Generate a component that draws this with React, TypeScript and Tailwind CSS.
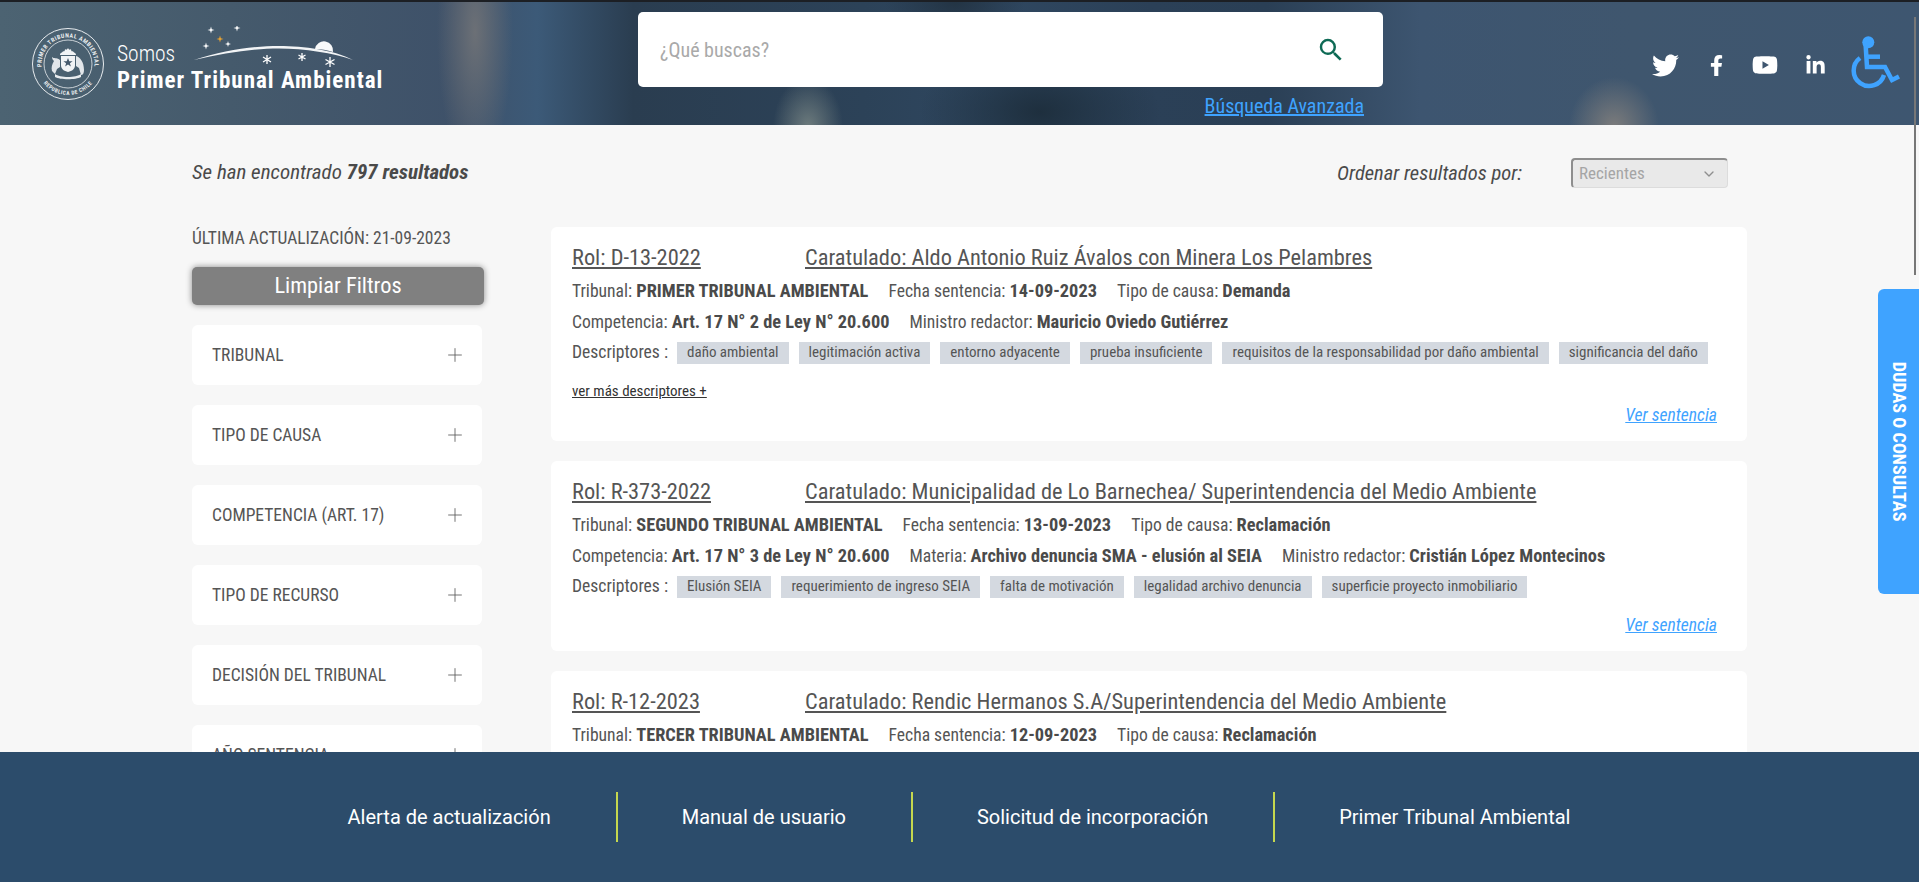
import React from 'react';
import { Plus, ChevronDown } from 'lucide-react';
import { FaTwitter, FaFacebookF, FaYoutube, FaLinkedinIn } from 'react-icons/fa';
import { MdSearch } from 'react-icons/md';

const filters = ['TRIBUNAL', 'TIPO DE CAUSA', 'COMPETENCIA (ART. 17)', 'TIPO DE RECURSO', 'DECISIÓN DEL TRIBUNAL', 'AÑO SENTENCIA'];

const results = [
  {
    rol: 'Rol: D-13-2022',
    title: 'Caratulado: Aldo Antonio Ruiz Ávalos con Minera Los Pelambres',
    row1: [['Tribunal:', 'PRIMER TRIBUNAL AMBIENTAL'], ['Fecha sentencia:', '14-09-2023'], ['Tipo de causa:', 'Demanda']],
    row2: [['Competencia:', 'Art. 17 N° 2 de Ley N° 20.600'], ['Ministro redactor:', 'Mauricio Oviedo Gutiérrez']],
    tags: ['daño ambiental', 'legitimación activa', 'entorno adyacente', 'prueba insuficiente', 'requisitos de la responsabilidad por daño ambiental', 'significancia del daño'],
    more: true,
  },
  {
    rol: 'Rol: R-373-2022',
    title: 'Caratulado: Municipalidad de Lo Barnechea/ Superintendencia del Medio Ambiente',
    row1: [['Tribunal:', 'SEGUNDO TRIBUNAL AMBIENTAL'], ['Fecha sentencia:', '13-09-2023'], ['Tipo de causa:', 'Reclamación']],
    row2: [['Competencia:', 'Art. 17 N° 3 de Ley N° 20.600'], ['Materia:', 'Archivo denuncia SMA - elusión al SEIA'], ['Ministro redactor:', 'Cristián López Montecinos']],
    tags: ['Elusión SEIA', 'requerimiento de ingreso SEIA', 'falta de motivación', 'legalidad archivo denuncia', 'superficie proyecto inmobiliario'],
    more: false,
  },
  {
    rol: 'Rol: R-12-2023',
    title: 'Caratulado: Rendic Hermanos S.A/Superintendencia del Medio Ambiente',
    row1: [['Tribunal:', 'TERCER TRIBUNAL AMBIENTAL'], ['Fecha sentencia:', '12-09-2023'], ['Tipo de causa:', 'Reclamación']],
    row2: [],
    tags: [],
    more: false,
  },
];

const footerLinks = ['Alerta de actualización', 'Manual de usuario', 'Solicitud de incorporación', 'Primer Tribunal Ambiental'];

const Star = ({ x, y, r = 3.5, fill = '#fff' }: { x: number; y: number; r?: number; fill?: string }) => (
  <path d={`M${x} ${y - r}L${x + r * 0.22} ${y - r * 0.22}L${x + r} ${y}L${x + r * 0.22} ${y + r * 0.22}L${x} ${y + r}L${x - r * 0.22} ${y + r * 0.22}L${x - r} ${y}L${x - r * 0.22} ${y - r * 0.22}Z`} fill={fill} />
);

const Seal = () => (
  <svg width="74" height="74" viewBox="0 0 74 74" className="shrink-0">
    <defs>
      <path id="sealTop" d="M12.100 46.100A26.500 26.500 0 1 1 61.900 46.100" />
      <path id="sealBottom" d="M6 37a31 31 0 0 0 62 0" />
    </defs>
    <circle cx="37" cy="37" r="35.500" fill="none" stroke="#e8ecef" strokeWidth="1" />
    <circle cx="37" cy="37" r="24" fill="none" stroke="#e8ecef" strokeWidth="0.8" />
    <text fontSize="6" fontWeight="700" fill="#e8ecef" letterSpacing="0.5">
      <textPath href="#sealTop" startOffset="50%" textAnchor="middle">PRIMER TRIBUNAL AMBIENTAL</textPath>
    </text>
    <text fontSize="5.500" fontWeight="700" fill="#e8ecef" letterSpacing="0.5">
      <textPath href="#sealBottom" startOffset="50%" textAnchor="middle">REPUBLICA DE CHILE</textPath>
    </text>
    <path d="M30 29h14v9c0 4-3 6-7 7-4-1-7-3-7-7z" fill="#f1f3f5" />
    <path d="M37 31l1.300 3.200h3.300l-2.700 2 1 3.200-2.900-2-2.900 2 1-3.200-2.700-2h3.300z" fill="#44586b" />
    <path d="M29 28c0-3 3-2 3-4 1 1 2 0 2-2 1 1 2 1 3-1 1 2 2 2 3 1 0 2 1 3 2 2 0 2 3 1 3 4z" fill="#f1f3f5" />
    <path d="M29 33c-4-3-6-1-8-3 0 2 1 3 2 4-2 3-3 7-2 10l3 3 2-5 3-2zM45 29c4 1 8 6 8 14 0 3-1 5-3 5l-2-7-3-2z" fill="#e2e6ea" />
    <path d="M24 47c5 4 21 4 26 0v3c-5 3-21 3-26 0z" fill="#e8ecef" />
  </svg>
);

// arc, sun and stars over the "Somos" line of the logo
const LogoArc = () => (
  <svg width="164" height="44" viewBox="0 0 164 44" className="absolute top-[24px] left-[194px]">
    <path d="M0 34C30 24 60 20 85 20C110 20 140 24 159 34C140 27 110 22.500 85 22.500C60 22.500 30 27 0 34Z" fill="#f2f4f6" />
    <path d="M121 23a9 9 0 0 1 18 3c-6-2-12-3-18-3z" fill="#f8f9fa" />
    <Star x={17} y={4} />
    <Star x={43} y={2} />
    <Star x={26} y={13} fill="#f0a62f" />
    <Star x={12} y={20} />
    <Star x={34} y={18} r={3} />
    <g stroke="#fff" strokeWidth="1.300">
      <path d="M73 29v9M69 31l8 5M77 31l-8 5" />
      <path d="M108 27v8M104.500 29l7 4M111.500 29l-7 4" />
      <path d="M136 31v10M131.500 33.500l9 5M140.500 33.500l-9 5" />
    </g>
  </svg>
);

const Wheelchair = () => (
  <svg width="70" height="65" viewBox="0 0 70 65" className="mt-[-2px] ml-[14px] shrink-0" fill="none" stroke="#3fa3ff" strokeWidth="4.500">
    <circle cx="28.300" cy="12.300" r="6" fill="#3fa3ff" stroke="none" />
    <path d="M25.500 13L27 37H45L52 50L59 46.500" />
    <path d="M28 26.700H40" />
    <path d="M20 28A15.500 15.500 0 1 0 44 45" />
  </svg>
);

const Meta = ({ items }: { items: string[][] }) => (
  <div className="flex h-[31px] items-center gap-5 text-[17.600px] whitespace-nowrap text-[#555]">
    {items.map(([label, value]) => (
      <span key={label}>
        {label} <b className="text-[18.350px] font-bold text-[#4a4a4a]">{value}</b>
      </span>
    ))}
  </div>
);

const ResultCard = ({ r }: { r: (typeof results)[number] }) => (
  <article className="rounded-md bg-white pt-[16px] pr-[30px] pb-[14px] pl-[21px]">
    <div className="flex h-[30px] items-center text-[22.400px] text-[#555] underline underline-offset-2">
      <span className="w-[233px] shrink-0">{r.rol}</span>
      <span>{r.title}</span>
    </div>
    <div className="mt-[2px]">
      <Meta items={r.row1} />
      <Meta items={r.row2} />
      {r.tags.length > 0 && (
        <div className="flex h-[31px] items-center text-[17.600px] whitespace-nowrap text-[#555]">
          <span className="mr-[9px]">Descriptores :</span>
          <div className="flex gap-[10px]">
            {r.tags.map((t) => (
              <span key={t} className="flex h-[22px] items-center bg-[#d4d9e0] px-[10px] text-[15px] text-[#555]">{t}</span>
            ))}
          </div>
        </div>
      )}
    </div>
    <div className="mt-[11px]">
      {r.more && <div className="flex h-[24px] items-center text-[15px] text-[#333] underline">ver más descriptores +</div>}
      <div className="flex h-[24px] items-center justify-end">
        <a className="text-[17.600px] text-[#3fa3ff] italic underline">Ver sentencia</a>
      </div>
    </div>
  </article>
);

export default function App() {
  return (
    <div className="relative flex h-[882px] flex-col overflow-hidden bg-[#f7f7f7] font-['Roboto_Condensed',Roboto,sans-serif] font-stretch-condensed">
      {/* Header */}
      <header className="relative flex h-[125px] shrink-0 border-t-2 border-[#1c1f24] bg-[radial-gradient(ellipse_45px_50px_at_1614px_125px,#7c7c7c_0%,rgba(124,124,124,0)_100%),radial-gradient(ellipse_35px_50px_at_808px_125px,#6d7b7d_0%,rgba(109,123,125,0)_100%),radial-gradient(ellipse_38px_140px_at_475px_30px,#6c7076_0%,rgba(108,112,118,0)_100%),radial-gradient(ellipse_120px_70px_at_1040px_110px,#1e2f3e_0%,rgba(30,47,62,0)_100%),radial-gradient(ellipse_70px_40px_at_955px_0px,#233444_0%,rgba(35,52,68,0)_100%),linear-gradient(90deg,#4c6372_0%,#455a6c_12%,#3e5169_24%,#3c5a78_28%,#2a3d50_33%,#2c4258_45%,#2f4760_52%,#2b4057_60%,#2a3f55_66%,#3d5570_74%,#3f566e_85%,#3e5670_100%)]">
        <LogoArc />
        <div className="flex w-[638px] shrink-0 items-center pl-[31px]">
          <Seal />
          <div className="ml-[12px] flex flex-col pt-[7px] text-white">
            <span className="text-[21.500px] leading-[27px] font-light">Somos</span>
            <span className="text-[23px] leading-[27px] font-bold tracking-[1px]">Primer Tribunal Ambiental</span>
          </div>
        </div>
        <div className="flex w-[745px] shrink-0 flex-col pt-[10px]">
          <div className="flex h-[75px] items-center justify-between rounded-[5px] bg-white pr-[37px] pl-[22px]">
            <span className="text-[20px] text-[#a9a9a9]">¿Qué buscas?</span>
            <MdSearch size={30} className="text-[#0e6a55]" />
          </div>
          <a className="mt-[7px] self-end pr-[19px] text-[20px] leading-[24px] text-[#3fa3ff] underline">Búsqueda Avanzada</a>
        </div>
        <div className="flex flex-1 items-center pl-[269px] text-white">
          <div className="mt-[3px] flex items-center">
            <FaTwitter size={27} />
            <FaFacebookF size={21} className="ml-[27px]" />
            <FaYoutube size={26} className="ml-[25px]" />
            <FaLinkedinIn size={21} className="ml-[27px]" />
          </div>
          <Wheelchair />
        </div>
      </header>

      {/* Results */}
      <main className="min-h-0 flex-1 overflow-hidden pr-[172px] pl-[192px]">
        <div className="mt-[32px] flex h-[32px] items-center justify-between pr-[19px]">
          <p className="text-[21px] text-[#4a4a4a] italic">
            Se han encontrado <b className="font-bold">797 resultados</b>
          </p>
          <div className="flex items-center">
            <span className="text-[20.500px] text-[#4a4a4a] italic">Ordenar resultados por:</span>
            <div className="ml-[49px] flex h-[30px] w-[157px] items-center justify-between rounded-[4px] border border-t-2 border-l-2 border-[#dcdcdc] border-t-[#8e8e8e] border-l-[#8e8e8e] bg-[#e9e9e9] pr-[10px] pl-[6px] text-[17px] text-[#a5a5a5]">
              Recientes
              <ChevronDown size={16} className="text-[#8f8f8f]" />
            </div>
          </div>
        </div>
        <div className="mt-[38px] flex gap-[67px]">
          <aside className="w-[292px] shrink-0">
            <p className="mt-[-1px] flex h-[24px] items-center text-[17.500px] text-[#555]">ÚLTIMA ACTUALIZACIÓN: 21-09-2023</p>
            <button className="mt-[17px] flex h-[38px] w-full items-center justify-center rounded-[5px] bg-[#808080] text-[22.400px] text-white shadow-[0_0_6px_rgba(0,0,0,0.45)]">Limpiar Filtros</button>
            <div className="mt-[20px] flex w-[290px] flex-col gap-[20px]">
              {filters.map((f) => (
                <div key={f} className="flex h-[60px] items-center justify-between rounded-md bg-white pr-[16px] pl-[20px] text-[17.500px] text-[#555]">
                  {f}
                  <Plus size={22} strokeWidth={0.9} className="text-[#555]" />
                </div>
              ))}
            </div>
          </aside>
          <section className="flex min-w-0 flex-1 flex-col gap-[20px]">
            {results.map((r) => (
              <ResultCard key={r.rol} r={r} />
            ))}
          </section>
        </div>
      </main>

      {/* Footer */}
      <footer className="relative flex h-[130px] shrink-0 items-center justify-center bg-[#2c4c6b] font-['Roboto',sans-serif] font-stretch-normal">
        {footerLinks.map((l, i) => (
          <div key={l} className={`flex h-[50px] items-center pr-[65px] pl-[64px] text-[20px] text-white ${i < footerLinks.length - 1 ? 'border-r-2 border-[#c5d74e]' : ''}`}>
            {l}
          </div>
        ))}
      </footer>

      {/* Side tab and scrollbar */}
      <div className="absolute top-[289px] right-0 flex h-[305px] w-[41px] items-center justify-center rounded-l-[6px] bg-[#3fa3ff]">
        <span className="rotate-90 text-[18.200px] font-bold whitespace-nowrap text-white">DUDAS O CONSULTAS</span>
      </div>
      <div className="absolute top-[17px] right-[3px] h-[258px] w-[2px] bg-[#777]" />
    </div>
  );
}
